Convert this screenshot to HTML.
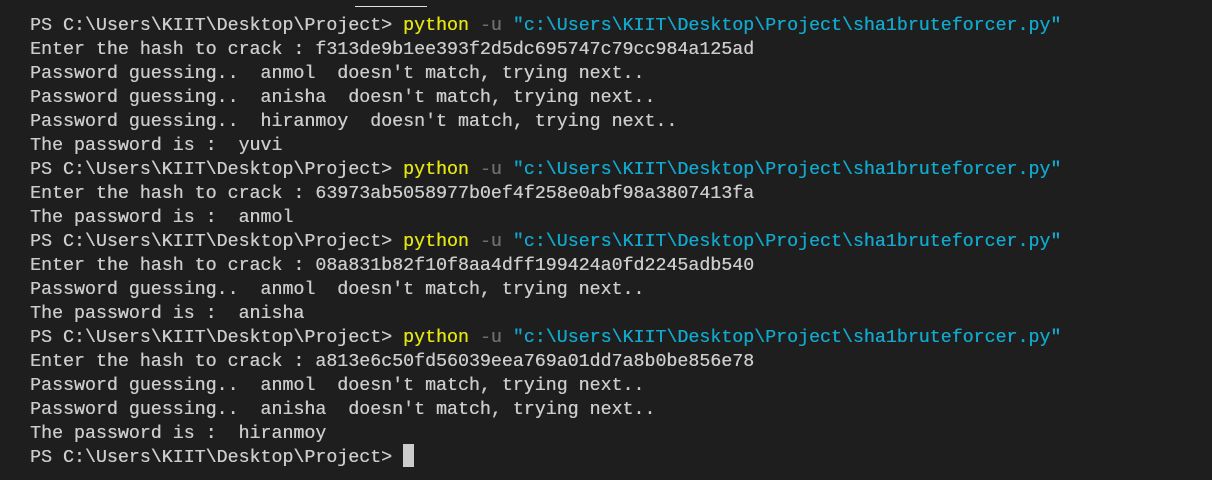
<!DOCTYPE html>
<html><head><meta charset="utf-8"><style>
html,body{margin:0;padding:0;background:#1e1e1e;width:1212px;height:480px;overflow:hidden}
.t{position:absolute;left:30px;top:14px;font-family:"Liberation Mono",monospace;font-size:18.3px;line-height:24px;color:#cccccc;white-space:pre;text-shadow:0.3px 0 0 currentColor}
.y{color:#e5e510}.g{color:#6e6e6e}.c{color:#11a8cd}
.bar{position:absolute;left:355px;top:6px;width:72px;height:1px;background:#e0e0e0}
.cur{position:absolute;left:403px;top:444px;width:11px;height:23px;background:#cccccc}
</style></head><body>
<div class="bar"></div>
<div class="t">PS C:\Users\KIIT\Desktop\Project&gt; <span class="y">python</span> <span class="g">-u</span> <span class="c">"c:\Users\KIIT\Desktop\Project\sha1bruteforcer.py"</span>
Enter the hash to crack : f313de9b1ee393f2d5dc695747c79cc984a125ad
Password guessing..  anmol  doesn't match, trying next..
Password guessing..  anisha  doesn't match, trying next..
Password guessing..  hiranmoy  doesn't match, trying next..
The password is :  yuvi
PS C:\Users\KIIT\Desktop\Project&gt; <span class="y">python</span> <span class="g">-u</span> <span class="c">"c:\Users\KIIT\Desktop\Project\sha1bruteforcer.py"</span>
Enter the hash to crack : 63973ab5058977b0ef4f258e0abf98a3807413fa
The password is :  anmol
PS C:\Users\KIIT\Desktop\Project&gt; <span class="y">python</span> <span class="g">-u</span> <span class="c">"c:\Users\KIIT\Desktop\Project\sha1bruteforcer.py"</span>
Enter the hash to crack : 08a831b82f10f8aa4dff199424a0fd2245adb540
Password guessing..  anmol  doesn't match, trying next..
The password is :  anisha
PS C:\Users\KIIT\Desktop\Project&gt; <span class="y">python</span> <span class="g">-u</span> <span class="c">"c:\Users\KIIT\Desktop\Project\sha1bruteforcer.py"</span>
Enter the hash to crack : a813e6c50fd56039eea769a01dd7a8b0be856e78
Password guessing..  anmol  doesn't match, trying next..
Password guessing..  anisha  doesn't match, trying next..
The password is :  hiranmoy
PS C:\Users\KIIT\Desktop\Project&gt; </div>
<div class="cur"></div>
</body></html>
